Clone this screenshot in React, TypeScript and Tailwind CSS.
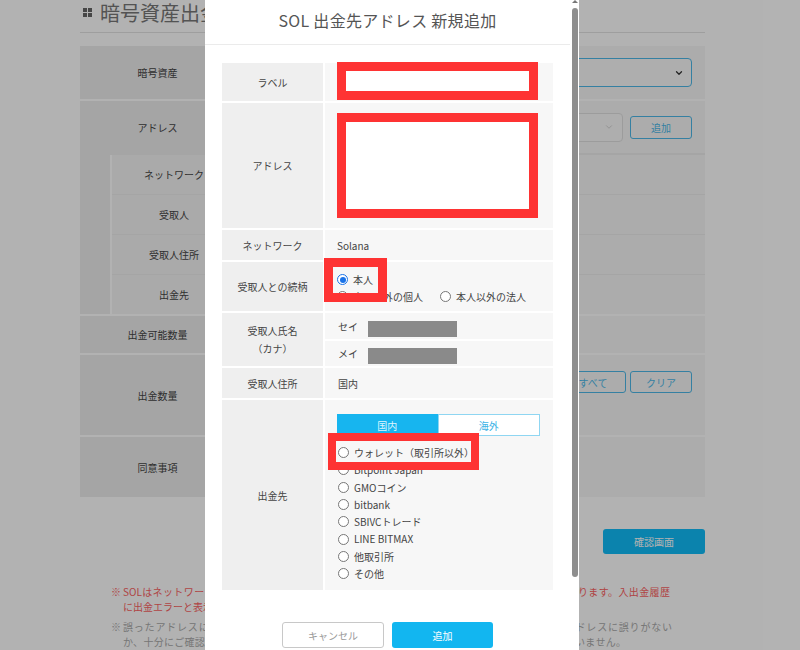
import React from 'react';
import { ChevronDown } from 'lucide-react';

const Radio = ({ checked = false }: { checked?: boolean }) =>
    checked ? (
        <span className="w-[11px] h-[11px] rounded-full border-[1.5px] border-[#1a73e8] bg-white flex items-center justify-center shrink-0">
            <span className="w-[6px] h-[6px] rounded-full bg-[#1a73e8]" />
        </span>
    ) : (
        <span className="w-[11px] h-[11px] rounded-full border border-[#777] bg-white shrink-0" />
    );

const destinations = [
    'ウォレット（取引所以外）',
    'Bitpoint Japan',
    'GMOコイン',
    'bitbank',
    'SBIVCトレード',
    'LINE BITMAX',
    '他取引所',
    'その他',
];

const subRows = ['ネットワーク', '受取人', '受取人住所', '出金先'];

const App = () => {
    return (
        <div className="relative w-full h-[650px] overflow-hidden bg-white font-['Noto_Sans_CJK_JP',sans-serif] text-[#444]">
            {/* page behind the dialog */}
            <div className="w-[625px] ml-[80px]">
                <div className="h-[33px] flex items-center gap-[8px] pb-[7px] border-b border-[#e2e2e2]">
                    <span className="grid grid-cols-2 gap-[1px] ml-[3px]">
                        <span className="w-[4px] h-[4px] bg-[#666]" />
                        <span className="w-[4px] h-[4px] bg-[#666]" />
                        <span className="w-[4px] h-[4px] bg-[#666]" />
                        <span className="w-[4px] h-[4px] bg-[#666]" />
                    </span>
                    <span className="text-[20px] text-[#777] leading-none">暗号資産出金</span>
                </div>

                <div className="mt-[13px] flex flex-col gap-[2px] text-[10px]">
                    {/* 暗号資産 */}
                    <div className="flex h-[53px] gap-[2px]">
                        <div className="w-[155px] bg-[#ececec] flex items-center justify-center">暗号資産</div>
                        <div className="flex-1 bg-[#f7f7f7] flex items-center justify-end pr-[13px]">
                            <div className="w-[380px] h-[29px] rounded-[4px] border border-[#4cb8e8] bg-[#f9f9f9] flex items-center justify-end pr-[7px]">
                                <ChevronDown size={10} strokeWidth={3} className="text-[#333]" />
                            </div>
                        </div>
                    </div>

                    {/* アドレス */}
                    <div className="bg-[#ececec] flex flex-col">
                        <div className="flex h-[52px] gap-[2px]">
                            <div className="w-[155px] flex items-center justify-center">アドレス</div>
                            <div className="flex-1 bg-[#f7f7f7] flex items-center justify-end gap-[7px] pr-[13px]">
                                <div className="w-[300px] h-[29px] rounded-[4px] border border-[#e0e0e0] bg-[#f9f9f9] flex items-center justify-end pr-[8px]">
                                    <ChevronDown size={10} strokeWidth={2} className="text-[#ccc]" />
                                </div>
                                <button className="w-[62px] h-[23px] rounded-[3px] border border-[#4cb8e8] bg-transparent text-[#4cb8e8]">追加</button>
                            </div>
                        </div>
                        <div className="mt-[2px] ml-[30px] flex flex-col gap-[1px] border-l-2 border-white">
                            {subRows.map((label) => (
                                <div key={label} className="flex h-[39px] gap-[2px]">
                                    <div className="w-[124px] bg-[#f4f4f4] flex items-center justify-center">{label}</div>
                                    <div className="flex-1 bg-[#f7f7f7]" />
                                </div>
                            ))}
                        </div>
                    </div>

                    {/* 出金可能数量 */}
                    <div className="flex h-[37px] gap-[2px]">
                        <div className="w-[155px] bg-[#ececec] flex items-center justify-center">出金可能数量</div>
                        <div className="flex-1 bg-[#f7f7f7]" />
                    </div>

                    {/* 出金数量 */}
                    <div className="flex h-[80px] gap-[2px]">
                        <div className="w-[155px] bg-[#ececec] flex items-center justify-center">出金数量</div>
                        <div className="flex-1 bg-[#f7f7f7] flex items-start justify-end gap-[4px] pt-[16px] pr-[13px]">
                            <button className="w-[66px] h-[22px] rounded-[3px] border border-[#4cb8e8] bg-transparent text-[#4cb8e8]">すべて</button>
                            <button className="w-[62px] h-[22px] rounded-[3px] border border-[#4cb8e8] bg-transparent text-[#4cb8e8]">クリア</button>
                        </div>
                    </div>

                    {/* 同意事項 */}
                    <div className="flex h-[60px] gap-[2px]">
                        <div className="w-[155px] bg-[#ececec] flex items-center justify-center">同意事項</div>
                        <div className="flex-1 bg-[#f7f7f7]" />
                    </div>
                </div>

                <div className="flex justify-end mt-[32px]">
                    <button className="w-[102px] h-[25px] rounded-[3px] bg-[#10bcf8] text-white text-[10px]">確認画面</button>
                </div>

                <div className="mt-[30px] ml-[31px] text-[10px] leading-[15px]">
                    <div className="flex text-[#fb6262]">
                        <span className="w-[12px]">※</span>
                        <div>
                            <p className="w-[547px] whitespace-nowrap [text-align-last:justify]">SOLはネットワークの混雑状況等により、お客様の出金が反映されるまでに時間がかかる場合があります。入出金履歴</p>
                            <p className="whitespace-nowrap">に出金エラーと表示される場合がございますが、出金は完了しております。</p>
                        </div>
                    </div>
                    <div className="flex text-[#aaa] mt-[5px]">
                        <span className="w-[12px]">※</span>
                        <div>
                            <p className="w-[549px] whitespace-nowrap [text-align-last:justify]">誤ったアドレスに送付した場合、資産を失う可能性がございます。ご送付前に、必ず出金先アドレスに誤りがない</p>
                            <p className="w-[503px] whitespace-nowrap [text-align-last:justify]">か、十分にご確認ください。お客様の入力誤りによる誤送付の損失について、当社は一切責任を負いません。</p>
                        </div>
                    </div>
                </div>
            </div>

            {/* dimmed backdrop */}
            <div className="absolute inset-0 bg-black/30" />

            {/* dialog */}
            <div className="absolute left-[205px] top-0 w-[374px] h-[650px] bg-white">
                <div className="w-[365px]">
                    <div className="h-[45px] border-b border-[#ebebeb] flex items-center justify-center pb-[5px] text-[16px] text-[#555] tracking-[0.3px]">
                        SOL 出金先アドレス 新規追加
                    </div>

                    <div className="px-[17px] pt-[18px] flex flex-col gap-[2px] text-[10px]">
                        {/* ラベル */}
                        <div className="flex h-[38px] gap-[2px]">
                            <div className="w-[101px] bg-[#efefef] flex items-center justify-center">ラベル</div>
                            <div className="flex-1 bg-[#f7f7f7] pl-[12px]">
                                <div className="w-[201px] h-[38px] -mt-[1px] border-[9px] border-[#fe3333] bg-white" />
                            </div>
                        </div>

                        {/* アドレス */}
                        <div className="flex h-[125px] gap-[2px]">
                            <div className="w-[101px] bg-[#efefef] flex items-center justify-center">アドレス</div>
                            <div className="flex-1 bg-[#f7f7f7] pl-[12px] pt-[10px]">
                                <div className="w-[201px] h-[105px] border-[9px] border-[#fe3333] bg-white" />
                            </div>
                        </div>

                        {/* ネットワーク */}
                        <div className="flex h-[30px] gap-[2px]">
                            <div className="w-[101px] bg-[#efefef] flex items-center justify-center">ネットワーク</div>
                            <div className="flex-1 bg-[#f7f7f7] pl-[12px] flex items-center">Solana</div>
                        </div>

                        {/* 受取人との続柄 */}
                        <div className="flex h-[49px] gap-[2px]">
                            <div className="w-[101px] bg-[#efefef] flex items-center justify-center">受取人との続柄</div>
                            <div className="relative flex-1 bg-[#f7f7f7] pl-[12px] pt-[9px] leading-[17px]">
                                <label className="flex items-center gap-[5px]">
                                    <Radio checked />
                                    本人
                                </label>
                                <div className="flex gap-[17px]">
                                    <label className="flex items-center gap-[5px]">
                                        <Radio />
                                        本人以外の個人
                                    </label>
                                    <label className="flex items-center gap-[5px]">
                                        <Radio />
                                        本人以外の法人
                                    </label>
                                </div>
                                <div className="absolute left-[-1px] top-[-4px] w-[63px] h-[44px] border-[9px] border-[#fe3333]" />
                            </div>
                        </div>

                        {/* 受取人氏名 */}
                        <div className="flex h-[53px] gap-[2px]">
                            <div className="w-[101px] bg-[#efefef] flex flex-col items-center justify-center leading-[18px]">
                                <span>受取人氏名</span>
                                <span>（カナ）</span>
                            </div>
                            <div className="flex-1 flex flex-col gap-[2px]">
                                <div className="h-[26px] bg-[#f7f7f7] pl-[13px] flex items-center gap-[10px]">
                                    セイ
                                    <span className="w-[89px] h-[16px] mt-[6px] bg-[#8a8a8a]" />
                                </div>
                                <div className="h-[25px] bg-[#f7f7f7] pl-[13px] flex items-center gap-[10px]">
                                    メイ
                                    <span className="w-[89px] h-[16px] mt-[5px] bg-[#8a8a8a]" />
                                </div>
                            </div>
                        </div>

                        {/* 受取人住所 */}
                        <div className="flex h-[30px] gap-[2px]">
                            <div className="w-[101px] bg-[#efefef] flex items-center justify-center">受取人住所</div>
                            <div className="flex-1 bg-[#f7f7f7] pl-[13px] flex items-center">国内</div>
                        </div>

                        {/* 出金先 */}
                        <div className="flex h-[190px] gap-[2px]">
                            <div className="w-[101px] bg-[#efefef] flex items-center justify-center">出金先</div>
                            <div className="relative flex-1 bg-[#f7f7f7] pl-[12px] pt-[14px]">
                                <div className="flex w-[203px] h-[22px]">
                                    <div className="flex-1 bg-[#17b5ef] text-[#dff5ff] flex items-center justify-center">国内</div>
                                    <div className="flex-1 bg-white border border-[#8fd6f2] text-[#3db3e6] flex items-center justify-center">海外</div>
                                </div>
                                <div className="mt-[8px] flex flex-col leading-[17.3px]">
                                    {destinations.map((d) => (
                                        <label key={d} className="flex items-center gap-[5px] pl-[1px]">
                                            <Radio />
                                            {d}
                                        </label>
                                    ))}
                                </div>
                                <div className="absolute left-[3px] top-[33px] w-[151px] h-[37px] border-[8px] border-[#fe3333]" />
                            </div>
                        </div>
                    </div>

                    <div className="flex justify-center gap-[8px] mt-[32px] text-[10px]">
                        <button className="w-[102px] h-[26px] rounded-[3px] border border-[#c8c8c8] bg-white text-[#999]">キャンセル</button>
                        <button className="w-[101px] h-[26px] rounded-[3px] bg-[#12b6f0] text-white">追加</button>
                    </div>
                </div>

                {/* scrollbar */}
                <div className="absolute right-0 top-0 w-[9px] h-full">
                    <div className="mx-auto w-0 h-0 border-x-[3px] border-x-transparent border-b-[3px] border-b-[#777]" />
                    <div className="mx-auto mt-[5px] w-[6px] h-[569px] rounded-full bg-[#8e8e8e]" />
                </div>
            </div>
        </div>
    );
};

export default App;
